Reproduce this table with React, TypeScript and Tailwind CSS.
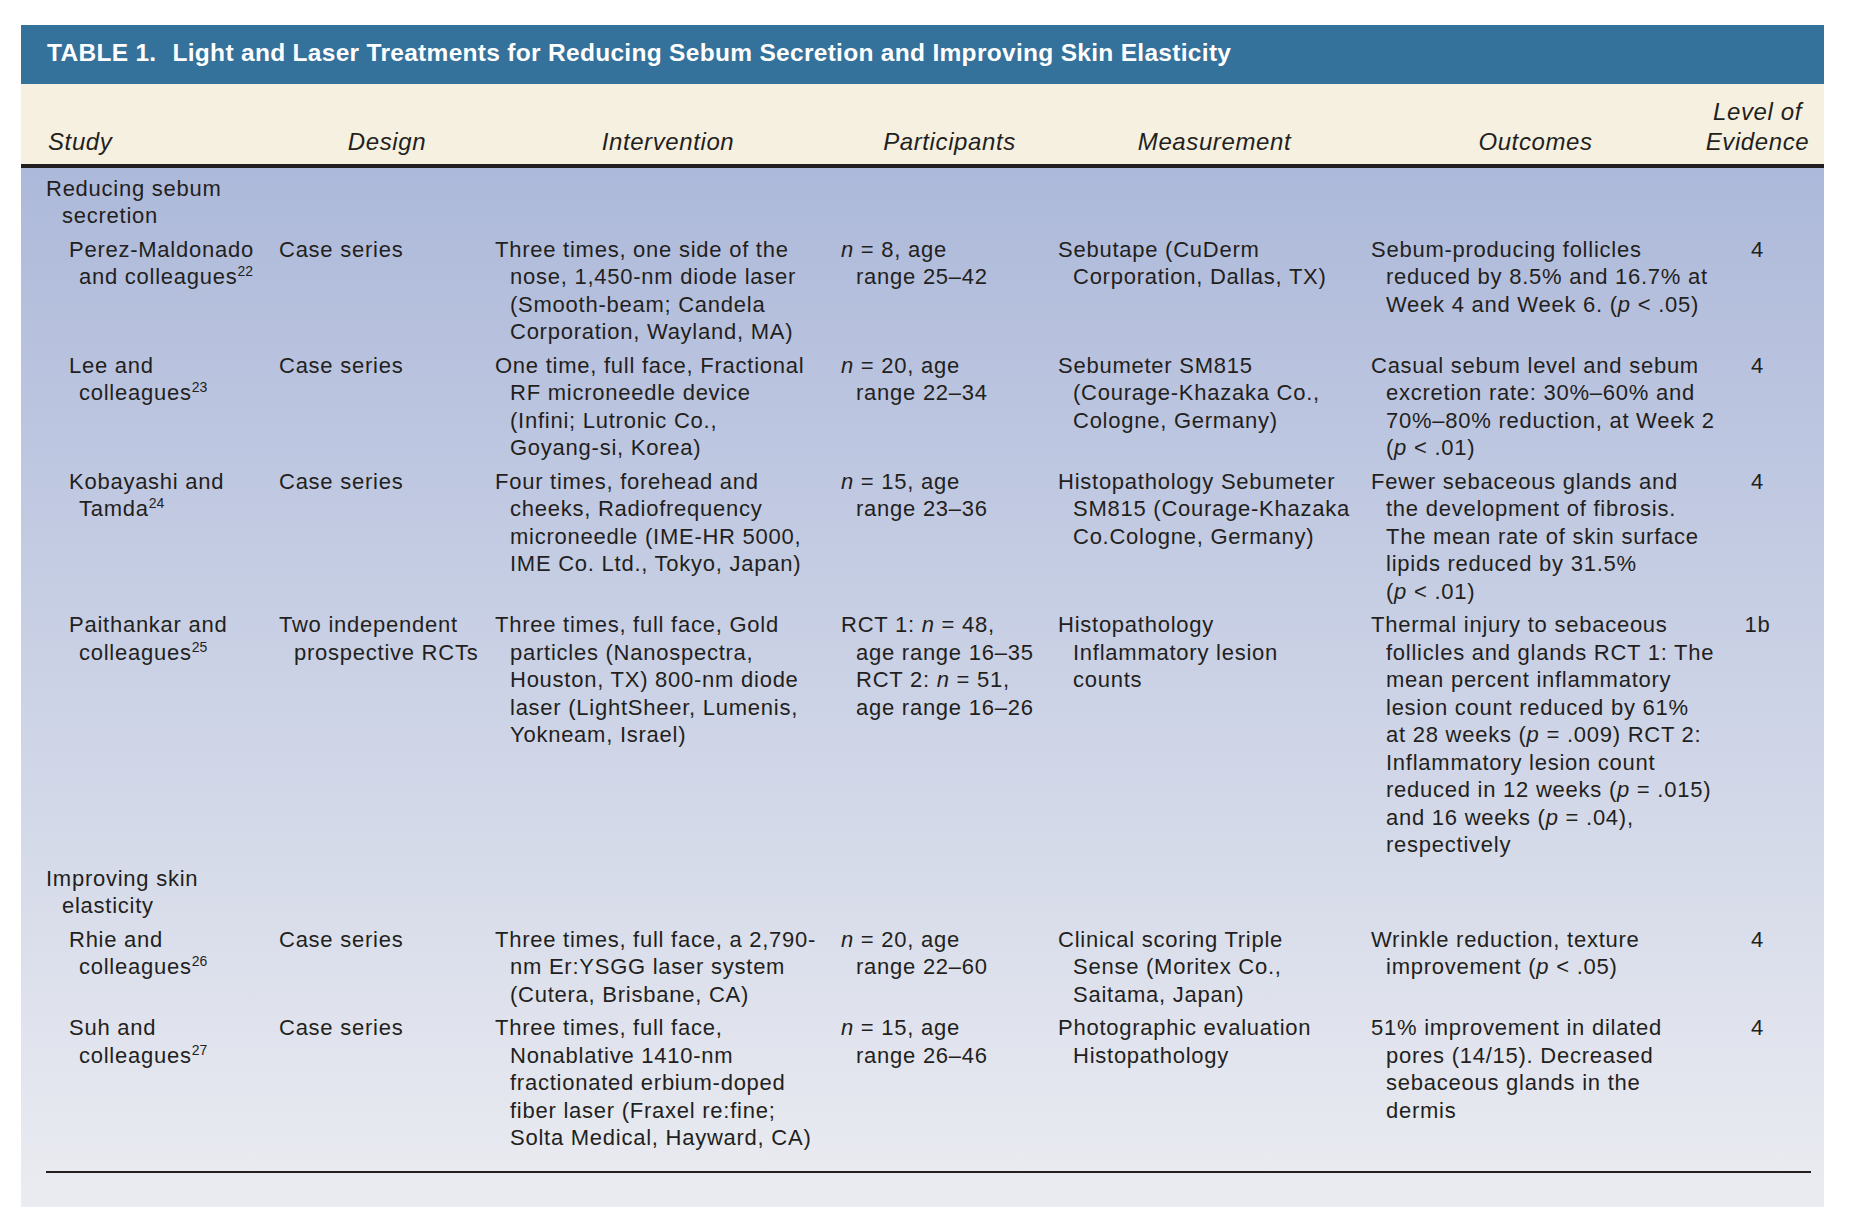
import React from "react";

type Line = React.ReactNode;

interface Row {
  study: Line[];
  design: Line[];
  intervention: Line[];
  participants: Line[];
  measurement: Line[];
  outcomes: Line[];
  level: string;
}

const Sup = ({ children }: { children: React.ReactNode }) => (
  <sup className="relative -top-[8px] text-[14px] leading-none tracking-normal">{children}</sup>
);

const N = () => <i>n</i>;
const P = () => <i>p</i>;

const rowsA: Row[] = [
  {
    study: ["Perez-Maldonado", <>and colleagues<Sup>22</Sup></>],
    design: ["Case series"],
    intervention: [
      "Three times, one side of the",
      "nose, 1,450-nm diode laser",
      "(Smooth-beam; Candela",
      "Corporation, Wayland, MA)",
    ],
    participants: [<><N /> = 8, age</>, "range 25–42"],
    measurement: ["Sebutape (CuDerm", "Corporation, Dallas, TX)"],
    outcomes: [
      "Sebum-producing follicles",
      "reduced by 8.5% and 16.7% at",
      <>Week 4 and Week 6. (<P /> &lt; .05)</>,
    ],
    level: "4",
  },
  {
    study: ["Lee and", <>colleagues<Sup>23</Sup></>],
    design: ["Case series"],
    intervention: [
      "One time, full face, Fractional",
      "RF microneedle device",
      "(Infini; Lutronic Co.,",
      "Goyang-si, Korea)",
    ],
    participants: [<><N /> = 20, age</>, "range 22–34"],
    measurement: ["Sebumeter SM815", "(Courage-Khazaka Co.,", "Cologne, Germany)"],
    outcomes: [
      "Casual sebum level and sebum",
      "excretion rate: 30%–60% and",
      "70%–80% reduction, at Week 2",
      <>(<P /> &lt; .01)</>,
    ],
    level: "4",
  },
  {
    study: ["Kobayashi and", <>Tamda<Sup>24</Sup></>],
    design: ["Case series"],
    intervention: [
      "Four times, forehead and",
      "cheeks, Radiofrequency",
      "microneedle (IME-HR 5000,",
      "IME Co. Ltd., Tokyo, Japan)",
    ],
    participants: [<><N /> = 15, age</>, "range 23–36"],
    measurement: ["Histopathology Sebumeter", "SM815 (Courage-Khazaka", "Co.Cologne, Germany)"],
    outcomes: [
      "Fewer sebaceous glands and",
      "the development of fibrosis.",
      "The mean rate of skin surface",
      "lipids reduced by 31.5%",
      <>(<P /> &lt; .01)</>,
    ],
    level: "4",
  },
  {
    study: ["Paithankar and", <>colleagues<Sup>25</Sup></>],
    design: ["Two independent", "prospective RCTs"],
    intervention: [
      "Three times, full face, Gold",
      "particles (Nanospectra,",
      "Houston, TX) 800-nm diode",
      "laser (LightSheer, Lumenis,",
      "Yokneam, Israel)",
    ],
    participants: [
      <>RCT 1: <N /> = 48,</>,
      "age range 16–35",
      <>RCT 2: <N /> = 51,</>,
      "age range 16–26",
    ],
    measurement: ["Histopathology", "Inflammatory lesion", "counts"],
    outcomes: [
      "Thermal injury to sebaceous",
      "follicles and glands RCT 1: The",
      "mean percent inflammatory",
      "lesion count reduced by 61%",
      <>at 28 weeks (<P /> = .009) RCT 2:</>,
      "Inflammatory lesion count",
      <>reduced in 12 weeks (<P /> = .015)</>,
      <>and 16 weeks (<P /> = .04),</>,
      "respectively",
    ],
    level: "1b",
  },
];

const rowsB: Row[] = [
  {
    study: ["Rhie and", <>colleagues<Sup>26</Sup></>],
    design: ["Case series"],
    intervention: [
      "Three times, full face, a 2,790-",
      "nm Er:YSGG laser system",
      "(Cutera, Brisbane, CA)",
    ],
    participants: [<><N /> = 20, age</>, "range 22–60"],
    measurement: ["Clinical scoring Triple", "Sense (Moritex Co.,", "Saitama, Japan)"],
    outcomes: ["Wrinkle reduction, texture", <>improvement (<P /> &lt; .05)</>],
    level: "4",
  },
  {
    study: ["Suh and", <>colleagues<Sup>27</Sup></>],
    design: ["Case series"],
    intervention: [
      "Three times, full face,",
      "Nonablative 1410-nm",
      "fractionated erbium-doped",
      "fiber laser (Fraxel re:fine;",
      "Solta Medical, Hayward, CA)",
    ],
    participants: [<><N /> = 15, age</>, "range 26–46"],
    measurement: ["Photographic evaluation", "Histopathology"],
    outcomes: [
      "51% improvement in dilated",
      "pores (14/15). Decreased",
      "sebaceous glands in the",
      "dermis",
    ],
    level: "4",
  },
];

function Lines({ lines }: { lines: Line[] }) {
  return (
    <>
      {lines.map((l, i) => (
        <React.Fragment key={i}>
          {i > 0 && <br />}
          {l}
        </React.Fragment>
      ))}
    </>
  );
}

function Cell({ lines, className = "" }: { lines: Line[]; className?: string }) {
  return (
    <div className={`pl-[15px] -indent-[15px] whitespace-nowrap ${className}`}>
      <Lines lines={lines} />
    </div>
  );
}

function StudyRow({ row }: { row: Row }) {
  return (
    <>
      <div className="pl-[33px] -indent-[10px] whitespace-nowrap">
        <Lines lines={row.study} />
      </div>
      <Cell lines={row.design} />
      <Cell lines={row.intervention} />
      <Cell lines={row.participants} />
      <Cell lines={row.measurement} />
      <Cell lines={row.outcomes} />
      <div className="text-center">{row.level}</div>
    </>
  );
}

function Section({ lines }: { lines: Line[] }) {
  return (
    <div className="col-span-7 pl-[16px] -indent-[16px]">
      <Lines lines={lines} />
    </div>
  );
}

const cols = "grid grid-cols-[233px_216px_346px_217px_313px_329px_115px]";

export default function App() {
  return (
    <div className="min-h-[1230px] w-[1858px] bg-white pt-[25px] pl-[21px] font-['Liberation_Sans',Arial,sans-serif] text-[#231f20]">
      <div className="w-[1803px]">
        {/* title band */}
        <div className="h-[59px] bg-[#34719b] pl-[26px] pt-[13px] text-[24.5px] font-bold leading-[30px] tracking-[0.3px] text-white">
          TABLE 1.<span className="ml-[16px]">Light and Laser Treatments for Reducing Sebum Secretion and Improving Skin Elasticity</span>
        </div>

        {/* column headings */}
        <div className={`${cols} h-[80px] items-end bg-[#f6f0e1] pb-[7px] pl-[25px] text-[24px] italic leading-[30px] tracking-[0.6px]`}>
          <div className="pl-[2px]">Study</div>
          <div className="text-center">Design</div>
          <div className="text-center">Intervention</div>
          <div className="text-center">Participants</div>
          <div className="text-center">Measurement</div>
          <div className="text-center">Outcomes</div>
          <div className="text-center">
            Level of
            <br />
            Evidence
          </div>
        </div>
        <div className="h-[4px] bg-[#231f20]" />

        {/* body */}
        <div className="bg-gradient-to-b from-[#adb9da] to-[#ebecf1] pb-[34px] pl-[25px] pt-[6.5px] text-[22px] leading-[27.5px] tracking-[0.75px]">
          <div className={`${cols} gap-y-[6px]`}>
            <Section lines={["Reducing sebum", "secretion"]} />
            {rowsA.map((r, i) => (
              <StudyRow key={i} row={r} />
            ))}
            <Section lines={["Improving skin", "elasticity"]} />
            {rowsB.map((r, i) => (
              <StudyRow key={i} row={r} />
            ))}
          </div>
          <div className="mt-[19.5px] h-[2px] w-[1765px] bg-[#231f20]" />
        </div>
      </div>
    </div>
  );
}
